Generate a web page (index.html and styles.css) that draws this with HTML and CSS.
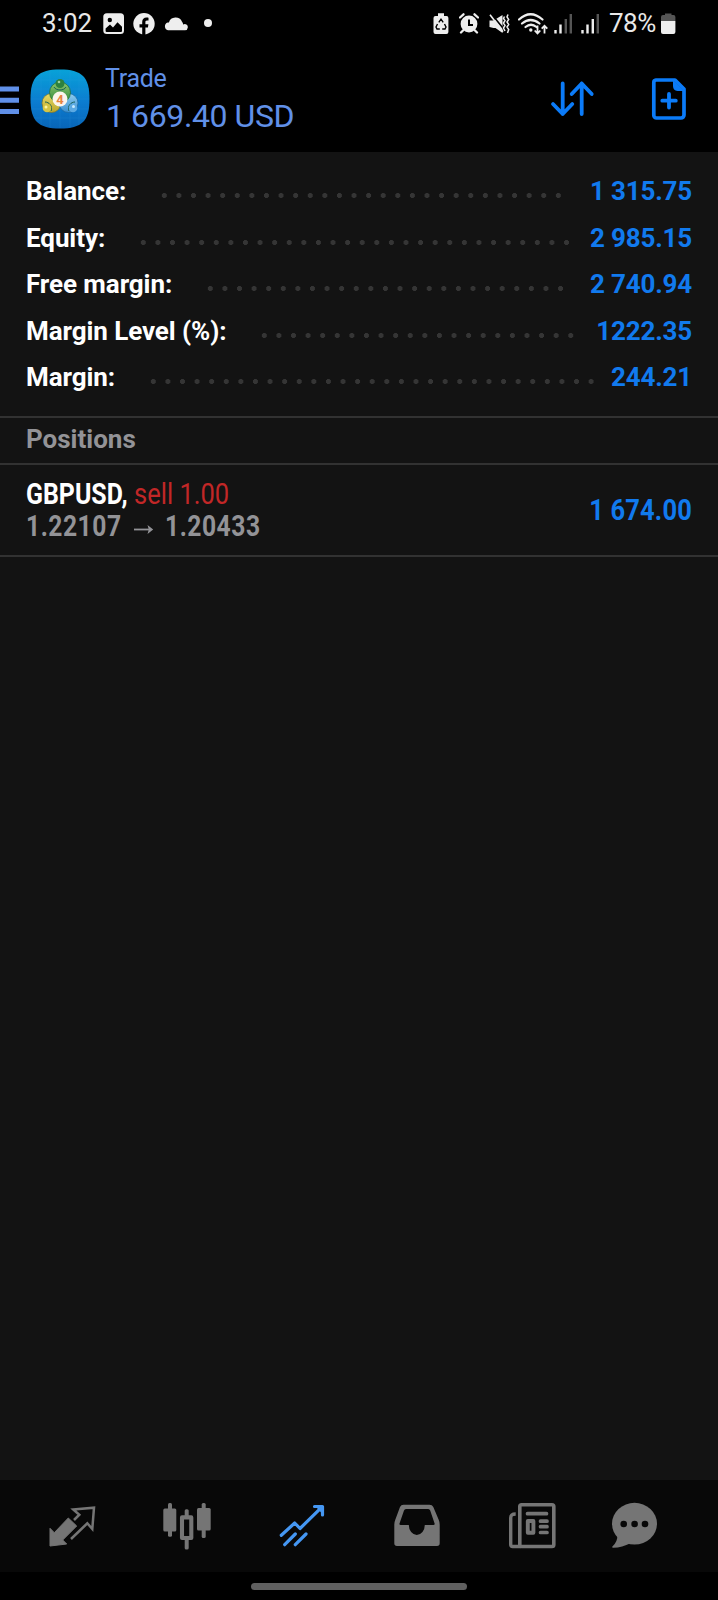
FILE: index.html
```html
<!DOCTYPE html>
<html lang="en">
<head>
<meta charset="utf-8">
<title>Trade</title>
<link rel="stylesheet" href="styles.css">
</head>
<body>
<div class="screen">
  <div class="status">
    <span class="clock">3:02</span>
    <svg class="st-img" width="22" height="22" viewBox="0 0 22 22"><rect x=".3" y=".3" width="20.7" height="20.7" rx="3.5" fill="#eee"/><circle cx="6.8" cy="7" r="2.2" fill="#000"/><path d="M2.6 15.5L7 11.6l3 2.8 4.5-5.2 4.5 4.6v4.2a1 1 0 0 1-1 1H3.600a1 1 0 0 1-1-1z" fill="#000"/></svg>
    <svg class="st-fb" width="22" height="22" viewBox="0 0 22 22"><circle cx="11" cy="10.700" r="10.700" fill="#eee"/><path d="M9.200 22v-7.500H6.500v-3.300h2.700V9c0-3 1.700-4.500 4.300-4.500 1 0 2 .2 2 .2v2.700H14c-1.300 0-1.600.8-1.600 1.600v2.200h3l-.5 3.300h-2.500V22z" fill="#000"/></svg>
    <svg class="st-cloud" width="24" height="14" viewBox="0 0 24 14"><path d="M4 13.200a4 4 0 0 1-.3-7.700h1.200A7 7 0 0 1 18 4.800a4.600 4.600 0 0 1 1.200 2.700 3 3 0 0 1 4.600 2.900 3 3 0 0 1-2.800 2.800z" fill="#eee"/></svg>
    <i class="dot"></i>
    <span class="spacer"></span>
    <svg class="st-rec" width="16" height="22" viewBox="0 0 16 22"><path d="M5 .3h6V3h2.500A2 2 0 0 1 15.400 5v14a2 2 0 0 1-2 2H2.500a2 2 0 0 1-2-2V5a2 2 0 0 1 2-2H5z" fill="#eee"/><path d="M5.800 9.300L8 6.200l2.200 3.100M11.500 11l1.500 3-1 2H9.200M6.800 16H4l-1-2 1.500-3" fill="none" stroke="#000" stroke-width="1.400"/></svg>
    <svg class="st-alarm" width="20" height="21" viewBox="0 0 20 21"><circle cx="10" cy="11" r="8.400" fill="#eee"/><path d="M1 4.500L4.500 1.300M19 4.500L15.500 1.300M4 17.500l-2 2M16 17.500l2 2" stroke="#eee" stroke-width="2.300" stroke-linecap="round"/><path d="M10 6.500v5.400h4" fill="none" stroke="#000" stroke-width="2"/></svg>
    <svg class="st-mute" width="21" height="20" viewBox="0 0 21 20"><path d="M.5 6.500h4L13.500 1v18l-7-5h-2l-4-1z" fill="#eee"/><path d="M1.500-1.300L15.500 16" stroke="#000" stroke-width="1.600"/><path d="M1 .8l13 17" stroke="#eee" stroke-width="1.600"/><path d="M15.500 2.500l-1 2 1.500 2-1.500 2.500 1.500 2.500-1.500 2.500 1.500 3M19 .5l-1 2.500 1.700 2.500L18 8l1.700 2.500L18 13l1.700 2.500L18.500 19" fill="none" stroke="#eee" stroke-width="1.500"/></svg>
    <svg class="st-wifi" width="31" height="22" viewBox="0 0 31 22"><path d="M1 6.500Q12.500-4 24.500 6.500M4 10.500q8.500-7 17.500 0M7.500 14q5.500-4.500 11 0" fill="none" stroke="#eee" stroke-width="2.200" stroke-linecap="round"/><circle cx="12.800" cy="17" r="1.700" fill="#eee"/><path d="M19.500 12.500v7.800M16.700 17.500l2.800 3 2.800-3M26.500 20.500v-7.500M23.700 15.700l2.800-3 2.800 3" fill="none" stroke="#eee" stroke-width="1.800"/></svg>
    <svg class="st-sig" width="19" height="20" viewBox="0 0 19 20"><path d="M1.500 16v3.500M6.500 10.500v9" stroke="#eee" stroke-width="2.400"/><path d="M11.800 5v14.500M16.800 0v19.500" stroke="#555" stroke-width="2.400"/></svg>
    <svg class="st-sig2" width="19" height="20" viewBox="0 0 19 20"><path d="M1.500 16v3.500M6.500 10.500v9M11.800 5v14.500" stroke="#eee" stroke-width="2.400"/><path d="M16.800 0v19.500" stroke="#555" stroke-width="2.400"/></svg>
    <span class="pct">78%</span>
    <svg class="st-bat" width="15" height="22" viewBox="0 0 15 22"><path d="M4 .5h6.500V2h2A2 2 0 0 1 14.400 4v4H0V4a2 2 0 0 1 2-2h2z" fill="#555"/><path d="M0 8h14.400v11a2 2 0 0 1-2 2H2a2 2 0 0 1-2-2z" fill="#eee"/></svg>
  </div>
  <header class="bar">
    <svg class="menu" width="19" height="29" viewBox="0 0 19 29"><path d="M0 3h19M0 14.300h19M0 25.500h19" stroke="#6090e8" stroke-width="5"/></svg>
    <svg class="logo" width="60" height="60" viewBox="0 0 60 60">
      <defs>
        <linearGradient id="sky" x1="0" y1="0" x2="0" y2="1"><stop offset="0" stop-color="#08a2d8"/><stop offset=".55" stop-color="#0b7cd0"/><stop offset="1" stop-color="#0865b8"/></linearGradient>
        <linearGradient id="gr" x1="0" y1="0" x2="0" y2="1"><stop offset="0" stop-color="#8cc56c"/><stop offset="1" stop-color="#2f8a3c"/></linearGradient>
        <linearGradient id="ye" x1="0" y1="0" x2="0" y2="1"><stop offset="0" stop-color="#e6dc68"/><stop offset="1" stop-color="#b9a52a"/></linearGradient>
        <linearGradient id="bl" x1="0" y1="0" x2="0" y2="1"><stop offset="0" stop-color="#8fcdf0"/><stop offset="1" stop-color="#3a8fd0"/></linearGradient>
      </defs>
      <path d="M30 .5C52 .5 59.500 8 59.500 30S52 59.500 30 59.500.5 52 .5 30 8 .5 30 .5z" fill="url(#sky)"/>
      <path d="M11 4v52M20 1v58M30 1v58M40 1v58M49 4v52M4 11h52M1 20h58M1 30h58M1 40h58M4 49h52" stroke="#35a5e5" stroke-width=".6" opacity=".25"/>
      <circle cx="21.500" cy="34" r="9.500" fill="url(#ye)" stroke="#817529" stroke-width=".7"/>
      <circle cx="38.500" cy="34" r="9.500" fill="url(#bl)" stroke="#1b659e" stroke-width=".7"/>
      <circle cx="30" cy="23.500" r="10.500" fill="url(#gr)" stroke="#1c6834" stroke-width=".7"/>
      <path d="M24 18c2 4 10 4 12 0M15 33c4 0 8 4 6 9M45 33c-4 0-8 4-6 9" fill="none" stroke="#175f55" stroke-width="1"/>
      <circle cx="30" cy="14.500" r="4.500" fill="#2d813e"/><circle cx="29" cy="13" r="1.300" fill="#9bd29a"/>
      <circle cx="17" cy="39" r="4.300" fill="#d4c544"/><circle cx="16" cy="38" r="1.500" fill="#fff6a0"/>
      <circle cx="43" cy="39" r="4.300" fill="#5ba9e2"/><circle cx="43.500" cy="37.500" r="1.500" fill="#c5eaff"/>
      <circle cx="30" cy="30" r="7.500" fill="#fbf5ec"/>
      <text x="30" y="34.600" text-anchor="middle" class="four">4</text>
    </svg>
    <div class="titles"><div class="t1">Trade</div><div class="t2">1 669.40 USD</div></div>
    <svg class="sort" width="46" height="38" viewBox="0 0 46 38"><path d="M12.700 3.500V34M3 24l9.700 10 9.600-10M31.700 34V3.500M21.700 14l10-10.500 10 10.500" fill="none" stroke="#0b7bf8" stroke-width="3.800" stroke-linecap="round" stroke-linejoin="round"/></svg>
    <svg class="doc" width="38" height="46" viewBox="0 0 38 46"><path d="M6 4h19l9 9v26a3 3 0 0 1-3 3H6.500a2.700 2.700 0 0 1-2.700-2.700V6.500A2.500 2.500 0 0 1 6 4z" fill="none" stroke="#0b7bf8" stroke-width="3.700" stroke-linejoin="round"/><path d="M23 4l11 11h-6.500q-4.500-.5-4.500-5z" fill="#0b7bf8"/><path d="M19 18v13.500M12.300 24.700h13.500" stroke="#0b7bf8" stroke-width="3.800" stroke-linecap="round"/></svg>
  </header>
  <main class="content">
    <section class="summary">
      <div class="row"><b>Balance:</b><span class="lead"><i></i></span><em>1 315.75</em></div>
      <div class="row"><b>Equity:</b><span class="lead"><i></i></span><em>2 985.15</em></div>
      <div class="row"><b>Free margin:</b><span class="lead"><i></i></span><em>2 740.94</em></div>
      <div class="row"><b>Margin Level (%):</b><span class="lead"><i></i></span><em>1222.35</em></div>
      <div class="row"><b>Margin:</b><span class="lead"><i></i></span><em>244.21</em></div>
    </section>
    <h2 class="section">Positions</h2>
    <article class="position">
      <div class="info">
        <div class="deal"><span class="sym">GBPUSD,</span><span class="side">sell 1.00</span></div>
        <div class="prices"><span class="from">1.22107</span><svg class="arrow" width="20" height="11" viewBox="0 0 20 11"><path d="M0 5.500h17" stroke="#939397" stroke-width="1.800"/><path d="M13.500 1l5.700 4.500-5.700 4.500 1.300-4.500z" fill="#939397"/></svg><span class="to">1.20433</span></div>
      </div>
      <span class="profit">1 674.00</span>
    </article>
  </main>
  <nav class="tabs">
    <svg width="48" height="48" viewBox="0 0 48 48"><path d="M2 26.300l4.300 4.400L20.300 16l8.400 8-14 14 4 4L2 44z" fill="#757575" stroke="#757575" stroke-linejoin="round"/><path d="M26 18l5.300-5.300-6-5.200L46 5.700 44.300 27l-5-5.700L23 37" fill="none" stroke="#757575" stroke-width="2.500"/></svg>
    <svg width="48" height="48" viewBox="0 0 48 48"><g fill="#757575"><rect x="5" y="1" width="4" height="33.700" rx="1.500"/><rect x=".3" y="6.500" width="13" height="23" rx="1.500"/><rect x="21.700" y="7.300" width="4" height="9" rx="1.500"/><rect x="21.700" y="36" width="4" height="11.500" rx="1.500"/><rect x="38.700" y="1" width="4" height="35" rx="1.500"/><rect x="34" y="6" width="13.700" height="22.500" rx="1.500"/></g><rect x="19" y="15.400" width="9.300" height="20.600" fill="none" stroke="#757575" stroke-width="4.100" stroke-linejoin="round"/></svg>
    <svg width="48" height="48" viewBox="0 0 48 48"><path d="M3.300 33.300L16.700 21l5.300 5.500L44.300 4.700M36.500 4.500h8v8.500M6.700 42.700L17.300 32M17.300 42.700L28 32" fill="none" stroke="#4597f3" stroke-width="3.200" stroke-linecap="round" stroke-linejoin="round"/><path d="M38 5h6.500v7z" fill="#4597f3"/></svg>
    <svg width="48" height="48" viewBox="0 0 48 48"><path fill-rule="evenodd" d="M10.500 2.700h26q2.700 0 3.800 2.300l5.500 13q.9 2.200.9 4.500v18.800q0 2.700-2.700 2.700H4q-2.700 0-2.700-2.700V22.500q0-2.300.9-4.500L7 5q1-2.300 3.500-2.300zM13 7q-1.500 0-2 1.500L6.500 21.500q-.4 1.600 1.200 1.600h8.100a8 9.900 0 0 0 16 0h8.600q1.600 0 1.200-1.600L37.200 8.500Q36.700 7 35.200 7z" fill="#757575"/></svg>
    <svg width="48" height="48" viewBox="0 0 48 48"><g fill="none" stroke="#757575"><rect x="11.800" y="2.800" width="34" height="41.700" rx="1.800" stroke-width="3.600"/><path d="M7.700 12C4 12 2.700 13 2.700 16v26.500q0 2 2 2H13" stroke-width="3.400"/><path d="M19.500 11.700h19M32.500 19.200h6.500M32.500 24.700h6.500M32.500 30.500h6.500" stroke-width="3.700" stroke-linecap="round"/><rect x="19.800" y="19" width="5.600" height="11.700" stroke-width="3.900" stroke-linejoin="round"/></g></svg>
    <svg class="chat" width="48" height="48" viewBox="0 0 48 48"><path d="M6.300 32q.8 7.500-5.300 13 .3.900 1.300.8 9-.4 17.200-4.600z" fill="#757575"/><ellipse cx="23.500" cy="21.700" rx="22.500" ry="20.900" fill="#757575"/><g fill="#080808"><circle cx="12.700" cy="22" r="3.300"/><circle cx="23.600" cy="22" r="3.300"/><circle cx="34" cy="22" r="3.300"/></g></svg>
  </nav>
  <div class="home"><i></i></div>
</div>
</body>
</html>
```

FILE: styles.css
```css
* { box-sizing: border-box; }
body { margin: 0; background: #000; font-family: Roboto, "Liberation Sans", sans-serif; }
svg { display: block; flex: none; }
.screen { width: 718px; height: 1600px; display: flex; flex-direction: column; background: #000; overflow: hidden; }

.status { height: 46px; display: flex; align-items: center; padding: 1px 42px 0 42px; color: #e8e8e8; font-size: 26px; line-height: 46px; }
.clock, .pct { margin-top: -2px; }
.clock { width: 61px; }
.st-fb { margin-left: 8px; }
.st-cloud { margin-left: 9px; }
.dot { width: 8px; height: 8px; border-radius: 50%; background: #eee; margin-left: 16px; margin-top: -1px; }
.spacer { flex: 1; }
.st-alarm { margin-left: 10px; }
.st-mute { margin-left: 10px; }
.st-wifi { margin-left: 8px; }
.st-sig { margin-left: 5px; }
.st-sig2 { margin-left: 8px; }
.pct { width: 52px; margin-left: 9px; letter-spacing: -.5px; }
.st-bat { margin-left: 0; }

.bar { height: 106px; display: flex; align-items: center; color: #6090e8; }
.menu { margin-right: 11px; margin-top: 2px; }
.titles { margin-left: 15px; width: 445px; padding-top: 4px; }
.t1 { font-size: 25px; line-height: 30px; letter-spacing: -.3px; }
.t2 { padding-left: 1px; font-size: 32px; line-height: 44px; letter-spacing: -.4px; }
.doc { margin-left: 54px; }
.four { font: bold 13px Roboto, sans-serif; fill: #e88440; }

.content { flex: 1; background: #131313; }
.summary { height: 266px; padding: 16px 26px 0; border-bottom: 2px solid #323232; }
.row { display: flex; height: 46.5px; line-height: 46.5px; font-size: 26px; }
.row b { color: #fff; font-weight: 700; letter-spacing: -.08px; }
.row em { color: #117aee; font-style: normal; font-weight: 700; letter-spacing: -.2px; }
.lead { flex: 1; margin: 0 11px 0 31px; }
.lead i { display: block; height: 5px; margin-top: 25px; width: round(down, 100%, 14.6px); background: radial-gradient(circle at center, #353535 2.2px, transparent 2.800px) 0 0 / 14.6px 5px repeat-x; }
.section { margin: 0; height: 47px; padding-left: 26px; font-size: 26px; line-height: 43px; font-weight: 700; color: #939397; border-bottom: 2px solid #323232; }
.position { height: 92px; display: flex; justify-content: space-between; padding: 13px 26px 0; border-bottom: 2px solid #323232; }
.deal, .prices { display: flex; height: 32px; line-height: 32px; font-size: 30px; }
.deal span, .prices span, .profit { transform: scaleX(.85); transform-origin: 0 50%; white-space: nowrap; }
.deal .sym { width: 108px; color: #fff; font-weight: 700; transform: scaleX(.83); }
.side { color: #c22727; }
.prices { color: #939397; font-weight: 700; font-size: 29px; }
.prices span { letter-spacing: .6px; }
.from { width: 108px; }
.arrow { margin-top: 14px; }
.to { margin-left: 11px; }
.profit { transform-origin: 100% 50%; color: #117aee; font-weight: 700; font-size: 30px; line-height: 64px; letter-spacing: .2px; }

.tabs { height: 92px; background: #080808; display: flex; gap: 67px; padding: 22px 0 0 48px; }
.chat { margin-left: -12px; }
.home { height: 28px; display: flex; justify-content: center; padding-top: 11px; }
.home i { width: 216px; height: 7px; border-radius: 4px; background: #606060; }
```
